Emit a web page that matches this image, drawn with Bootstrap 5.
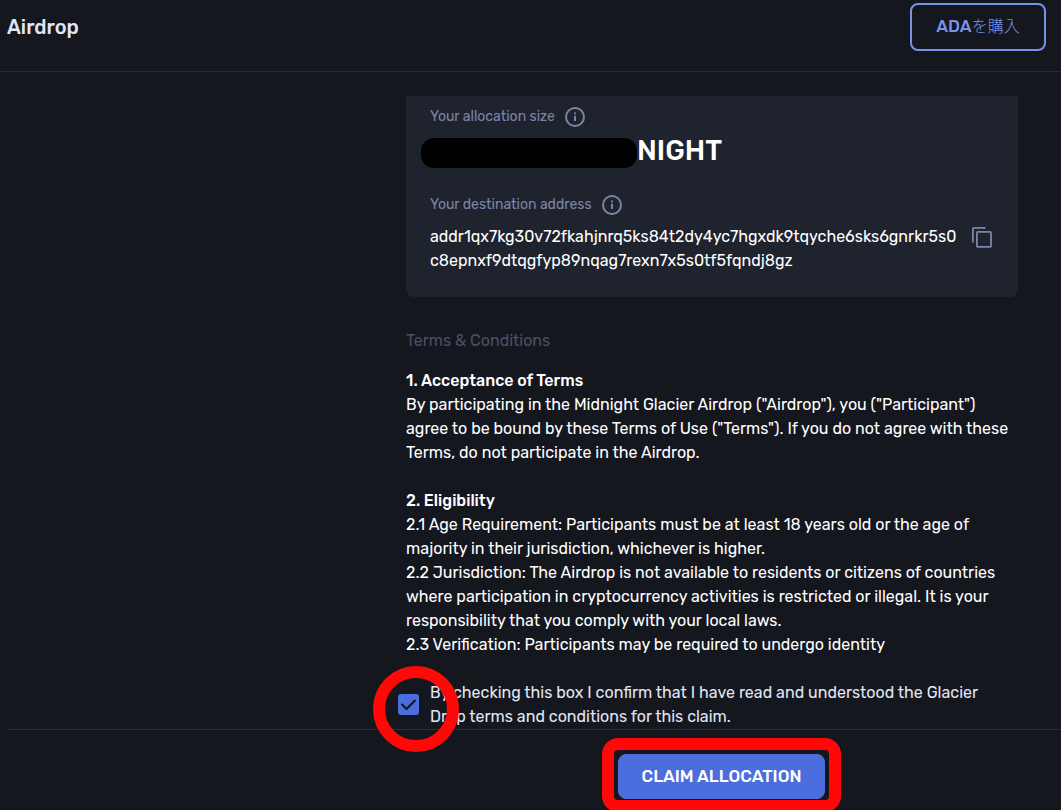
<!DOCTYPE html>
<html lang="en">
<head>
<meta charset="utf-8">
<meta name="viewport" content="width=device-width, initial-scale=1">
<title>Airdrop</title>
<link href="https://cdn.jsdelivr.net/npm/bootstrap@5.3.0/dist/css/bootstrap.min.css" rel="stylesheet">
<script defer src="https://cdn.jsdelivr.net/npm/bootstrap@5.3.0/dist/js/bootstrap.bundle.min.js"></script>
<style>
  body { background: #15171f; color: #fff; font-family: Rubik, Roboto, "Noto Sans CJK JP", sans-serif; font-size: 16px; line-height: 24px; }
  .topbar { height: 72px; padding: 3px 15px 20px 7px; border-bottom: 1px solid #262a35; }
  .topbar h1 { font-size: 20px; line-height: 24px; font-weight: 500; color: #e1e6f5; }
  .btn-buy { --bs-btn-color: #7892e8; --bs-btn-border-color: #7892e8; --bs-btn-hover-color: #15171f; --bs-btn-hover-bg: #7892e8;
    border-width: 2px; border-radius: 8px; height: 48px; min-width: 136px; padding: 0 24px; font-size: 17px; font-weight: 500; }
  .btn-buy span { font-size: 16px; font-weight: 300; }
  .claim-column { width: 100%; max-width: 612px; margin: 24px 43px 0 auto; }
  .claim-card { background: #1f232e; border-radius: 0 0 8px 8px; min-height: 201px; padding: 9px 24px 24px; }
  .field-name { font-size: 14px; color: #7c85a7; gap: 9px; }
  .amount { font-size: 28px; line-height: 32px; font-weight: 500; margin: 6px 0 25px; }
  .redacted { width: 216px; height: 30px; border-radius: 13px; background: #000; margin: 3px 0 0 -9px; }
  .address-row { padding-top: 8px; }
  .address-text { max-width: 530px; word-break: break-all; }
  .icon-btn { color: #7c85a7; line-height: 0; }
  .terms-title { font-size: 16px; line-height: 24px; font-weight: 400; color: #4a5065; margin: 32px 0 16px; }
  .clause { font-size: 16px; line-height: 24px; font-weight: 500; }
  .consent { margin: 24px 0 0 -8px; gap: 11px; color: #e1e6f5; }
  .consent label { max-width: 560px; }
  .consent .form-check-input { width: 21px; height: 21px; margin: 0 0 2px; border-radius: 3px; border: 0; background-color: #4b6dde; }
  .consent .form-check-input:checked { background-size: 21px; background-image: url("data:image/svg+xml,%3Csvg xmlns='http://www.w3.org/2000/svg' viewBox='0 0 21 21'%3E%3Cpath d='M3.5 10l5 5 9-9' fill='none' stroke='%2315171f' stroke-width='2.2'/%3E%3C/svg%3E"); }
  .circle-mark { position: absolute; inset: -28px -40px -35px -25px; border: 12px solid #fe0808; border-radius: 50%; pointer-events: none; }
  .actions { margin-left: 7px; padding: 24px 0 11px 375px; border-top: 1px solid #2c303b; }
  .btn-claim { --bs-btn-color: #fff; --bs-btn-bg: #4b6dde; --bs-btn-border-color: #4b6dde; --bs-btn-hover-color: #fff; --bs-btn-hover-bg: #3f5fcb;
    height: 45px; width: 207px; border-radius: 8px; padding: 0; font-size: 17px; font-weight: 500; }
  .box-mark { position: absolute; inset: -16px -16px -13px; border: 12px solid #fe0808; border-radius: 16px; pointer-events: none; }
</style>
</head>
<body class="d-flex flex-column min-vh-100 overflow-x-hidden">
<header class="topbar d-flex align-items-center justify-content-between">
  <h1 class="m-0">Airdrop</h1>
  <button type="button" class="btn btn-buy" lang="ja">ADA<span>を購入</span></button>
</header>

<main class="claim-column">
  <section class="claim-card">
    <div class="field-name d-flex align-items-center">Your allocation size
      <svg width="22" height="22" viewBox="0 0 22 22" fill="none" stroke="currentColor" stroke-width="2" aria-hidden="true"><circle cx="11" cy="11" r="9"/><path d="M11 9.8v5.2M11 6.4v1.8"/></svg>
    </div>
    <div class="amount d-flex"><span class="redacted"></span>NIGHT</div>
    <div class="field-name d-flex align-items-center">Your destination address
      <svg width="22" height="22" viewBox="0 0 22 22" fill="none" stroke="currentColor" stroke-width="2" aria-hidden="true"><circle cx="11" cy="11" r="9"/><path d="M11 9.8v5.2M11 6.4v1.8"/></svg>
    </div>
    <div class="address-row d-flex justify-content-between align-items-start">
      <div class="address-text">addr1qx7kg30v72fkahjnrq5ks84t2dy4yc7hgxdk9tqyche6sks6gnrkr5s0c8epnxf9dtqgfyp89nqag7rexn7x5s0tf5fqndj8gz</div>
      <button type="button" class="btn icon-btn border-0 p-0" aria-label="Copy address">
        <svg width="24" height="24" viewBox="0 0 24 24" fill="none" stroke="currentColor" stroke-width="1.8"><path d="M2.9 17.5V3.9q0-1 1-1H15.5"/><rect x="6.9" y="6.9" width="14.1" height="15" rx="1"/></svg>
      </button>
    </div>
  </section>

  <h2 class="terms-title">Terms &amp; Conditions</h2>
  <section class="mb-4">
    <h3 class="clause m-0">1. Acceptance of Terms</h3>
    <p class="m-0">By participating in the Midnight Glacier Airdrop ("Airdrop"), you ("Participant") agree to be bound by these Terms of Use ("Terms"). If you do not agree with these Terms, do not participate in the Airdrop.</p>
  </section>
  <section>
    <h3 class="clause m-0">2. Eligibility</h3>
    <p class="m-0">2.1 Age Requirement: Participants must be at least 18 years old or the age of majority in their jurisdiction, whichever is higher.</p>
    <p class="m-0">2.2 Jurisdiction: The Airdrop is not available to residents or citizens of countries where participation in cryptocurrency activities is restricted or illegal. It is your responsibility that you comply with your local laws.</p>
    <p class="m-0">2.3 Verification: Participants may be required to undergo identity</p>
  </section>
  <div class="consent d-flex align-items-center">
    <span class="position-relative d-flex"><input class="form-check-input" type="checkbox" id="agree" checked><span class="circle-mark"></span></span>
    <label for="agree">By checking this box I confirm that I have read and understood the Glacier Drop terms and conditions for this claim.</label>
  </div>
</main>

<footer class="actions d-flex justify-content-center">
  <div class="position-relative">
    <button type="button" class="btn btn-claim">CLAIM ALLOCATION</button>
    <span class="box-mark"></span>
  </div>
</footer>
</body>
</html>
